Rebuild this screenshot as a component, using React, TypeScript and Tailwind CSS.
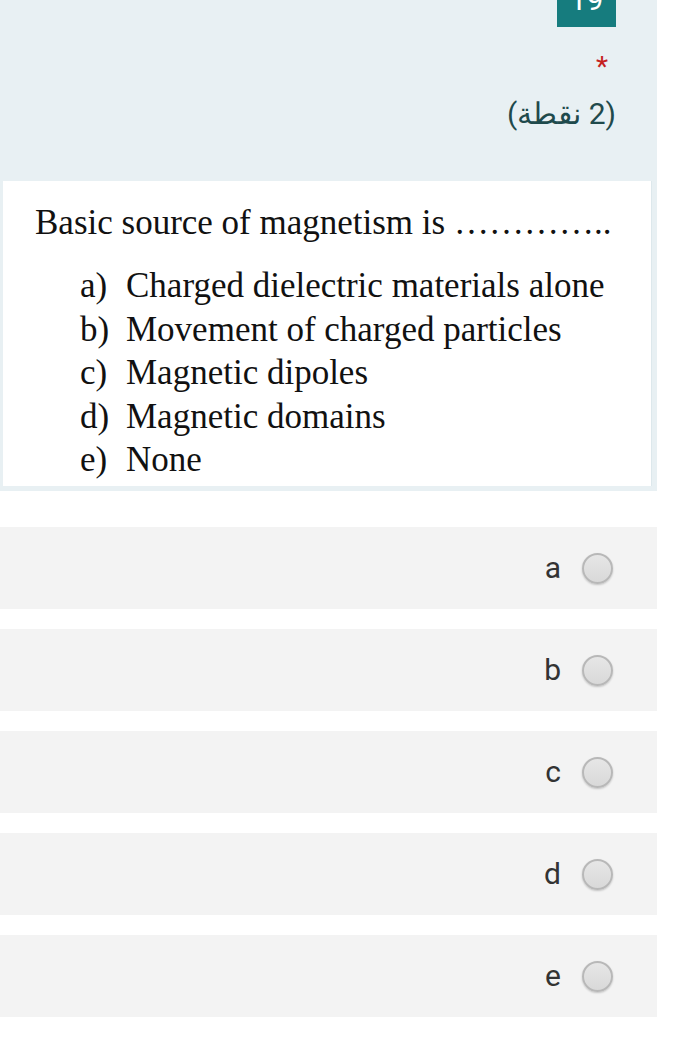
import React from "react";

const OPTIONS = [
  { key: "a)", text: "Charged dielectric materials alone" },
  { key: "b)", text: "Movement of charged particles" },
  { key: "c)", text: "Magnetic dipoles" },
  { key: "d)", text: "Magnetic domains" },
  { key: "e)", text: "None" },
];

const CHOICES = ["a", "b", "c", "d", "e"];

export default function App() {
  return (
    <div className="w-[687px] min-h-[1064px] bg-white">
      <div className="w-[657px]">
        {/* Question header panel */}
        <div className="flex flex-col items-end bg-[#e8f0f3] pb-[5px]">
          <div className="relative mr-[41px] h-[27px] w-[59px] overflow-hidden bg-[#167c7e]">
            <span className="absolute bottom-[12px] left-0 right-0 text-center font-['Roboto',sans-serif] text-[30px] leading-[30px] text-white">
              19
            </span>
          </div>
          <div className="mr-[49px] mt-[26px] h-[26px] font-['Roboto',sans-serif] text-[28px] leading-[28px] text-[#c5221f]">
            *
          </div>
          <div
            dir="rtl"
            className="mr-[41px] mt-[15px] font-['Roboto','Noto_Sans',sans-serif] text-[30px] leading-[40px] text-[#1f4a4c]"
          >
            (2 نقطة)
          </div>

          {/* Question image */}
          <div className="mt-[47px] ml-[3px] mr-[5px] h-[305px] self-stretch border-r border-[#dde8ec] bg-white pt-[20px] pl-[32px] font-['Liberation_Serif',serif] text-[35px] text-[#111]">
            <div className="leading-[44px]">
              Basic source of magnetism is …………..
            </div>
            <div className="mt-[19px] pl-[45px]">
              {OPTIONS.map((o) => (
                <div key={o.key} className="flex leading-[43.5px]">
                  <span className="w-[46px] shrink-0">{o.key}</span>
                  <span>{o.text}</span>
                </div>
              ))}
            </div>
          </div>
        </div>

        {/* Answer choices */}
        <div className="mt-[36px] flex flex-col gap-[20px]">
          {CHOICES.map((c) => (
            <div
              key={c}
              className="flex h-[82px] items-center justify-end gap-[21px] bg-[#f3f3f3] pr-[44px]"
            >
              <span className="font-['Roboto',sans-serif] text-[30px] leading-none text-[#333]">
                {c}
              </span>
              <span className="h-[31px] w-[31px] rounded-full border-2 border-[#b8b8b8] bg-linear-to-b from-[#e6e6e6] to-[#d9d9d9] shadow-[0_1px_2px_rgba(0,0,0,0.2)]" />
            </div>
          ))}
        </div>
      </div>
    </div>
  );
}
